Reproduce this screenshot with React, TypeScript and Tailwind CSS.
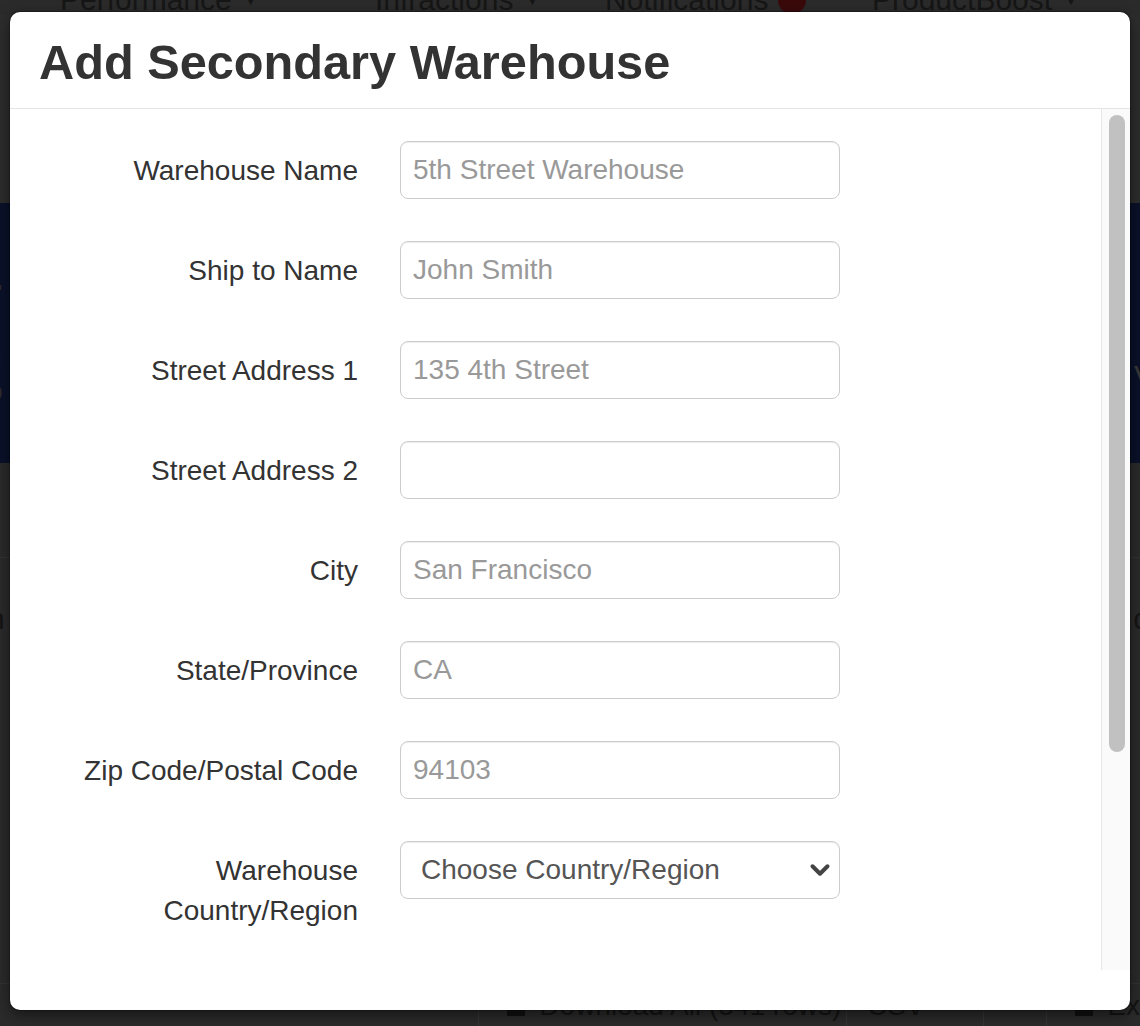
import { ChevronDown } from "lucide-react";

const fields = [
  { label: "Warehouse Name", placeholder: "5th Street Warehouse" },
  { label: "Ship to Name", placeholder: "John Smith" },
  { label: "Street Address 1", placeholder: "135 4th Street" },
  { label: "Street Address 2", placeholder: "" },
  { label: "City", placeholder: "San Francisco" },
  { label: "State/Province", placeholder: "CA" },
  { label: "Zip Code/Postal Code", placeholder: "94103" },
];

function Backdrop() {
  return (
    <div className="flex flex-col text-[#161616]">
      {/* top nav, mostly hidden under the modal */}
      <nav className="-mt-[15px] flex h-[30px] items-center pl-[60px] text-[30px] leading-none">
        <div className="flex w-[315px] items-center gap-[12px]">
          Performance <span className="text-[14px]">▼</span>
        </div>
        <div className="flex w-[230px] items-center gap-[12px]">
          Infractions <span className="text-[14px]">▼</span>
        </div>
        <div className="flex w-[267px] items-center gap-[10px]">
          Notifications
          <span className="h-[28px] w-[28px] rounded-full bg-[#3a0a0a]" />
        </div>
        <div className="flex items-center gap-[12px]">
          ProductBoost <span className="text-[14px]">▼</span>
        </div>
      </nav>

      <div className="h-[188px] bg-[#2d2d2d]" />

      <section className="flex h-[260px] justify-between bg-[#0a1129] text-[#2e2e2e]">
        <div className="-ml-[14px] flex flex-col pt-[70px]">
          <span className="text-[40px] font-bold leading-[40px]">r</span>
          <span className="mt-[30px] text-[30px] leading-[32px]">c</span>
          <span className="text-[30px] leading-[32px]">o</span>
        </div>
        <div className="-mr-[14px] pt-[150px] text-[30px] text-[#3a3a3a]">V</div>
      </section>

      <div className="h-[95px] border-b border-[#333] bg-[#2b2b2b]" />

      <div className="flex h-[120px] items-center justify-between bg-[#2b2b2b] text-[30px] text-[#151515]">
        <span className="-ml-[12px]">n</span>
        <span className="-mr-[10px]">d</span>
      </div>

      <div className="h-[305px] bg-[#2b2b2b]" />

      <div className="flex h-[60px] items-start border-t border-[#333] bg-[#2b2b2b] text-[28px] leading-none text-[#141414]">
        <div className="w-[483px]" />
        <div className="flex h-full w-[371px] items-start gap-[14px] border-l border-[#363636] pl-[28px] pt-[8px]">
          <span className="mt-[6px] h-[18px] w-[18px] bg-[#111]" />
          Download All (341 rows)
        </div>
        <div className="flex h-full w-[138px] items-start border-l border-[#363636] pl-[20px] pt-[8px]">
          CSV <span className="ml-[42px] text-[14px]">▼</span>
        </div>
        <div className="h-full w-[64px] border-l border-[#363636]" />
        <div className="flex h-full flex-1 items-start gap-[14px] border-l border-[#363636] pl-[28px] pt-[8px]">
          <span className="mt-[6px] h-[18px] w-[18px] bg-[#111]" />
          Ex
        </div>
      </div>
    </div>
  );
}

export default function App() {
  return (
    <div className="relative h-[1026px] w-[1140px] overflow-hidden bg-[#2b2b2b] font-['Liberation_Sans',Arial,sans-serif]">
      <Backdrop />

      {/* modal */}
      <div className="absolute left-[10px] top-[12px] flex h-[998px] w-[1120px] flex-col overflow-hidden rounded-[10px] bg-white shadow-[0_0_0_1px_rgba(0,0,0,0.25),0_5px_15px_rgba(0,0,0,0.5)]">
        <div className="flex h-[97px] items-center border-b border-[#e5e5e5] pl-[29px] pt-[4px]">
          <h3 className="text-[48.7px] font-bold leading-none text-[#333]">
            Add Secondary Warehouse
          </h3>
        </div>

        <div className="flex min-h-0 flex-1">
          <form className="flex flex-1 flex-col gap-[42px] pt-[32px] text-[28px] text-[#333]">
            {fields.map((f) => (
              <div key={f.label} className="flex items-start">
                <label className="ml-[30px] w-[318px] pt-[10px] text-right leading-[40px]">
                  {f.label}
                </label>
                <input
                  type="text"
                  placeholder={f.placeholder}
                  className="ml-[42px] h-[58px] w-[440px] rounded-[8px] border border-[#ccc] px-[12px] text-[28px] text-[#555] shadow-[inset_0_1px_1px_rgba(0,0,0,0.075)] outline-none placeholder:text-[#999]"
                />
              </div>
            ))}

            <div className="flex items-start">
              <label className="ml-[30px] w-[318px] pt-[10px] text-right leading-[40px]">
                Warehouse Country/Region
              </label>
              <div className="relative ml-[42px] w-[440px]">
                <select className="h-[58px] w-full appearance-none rounded-[8px] border border-[#ccc] bg-white pl-[20px] text-[28px] text-[#555] shadow-[inset_0_1px_1px_rgba(0,0,0,0.075)] outline-none">
                  <option>Choose Country/Region</option>
                </select>
                <ChevronDown
                  className="pointer-events-none absolute right-[5px] top-[14px] h-[30px] w-[30px] text-[#444]"
                  strokeWidth={3.2}
                />
              </div>
            </div>
          </form>

          {/* scrollbar */}
          <div className="flex w-[29px] flex-col border-l border-[#e6e6e6] bg-[#fafafa] pl-[7px] pr-[5px] pt-[6px]">
            <div className="h-[637px] rounded-full bg-[#c1c1c1]" />
          </div>
        </div>

        <div className="h-[40px]" />
      </div>
    </div>
  );
}
